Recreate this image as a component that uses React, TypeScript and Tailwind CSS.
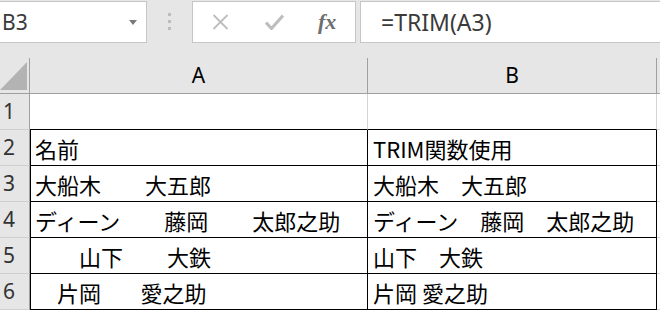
import { Fragment } from "react";

const CJK = "font-['Noto_Sans_CJK_JP',sans-serif]";
const UI = "font-['Noto_Sans','Noto_Sans_CJK_JP',sans-serif]";

type Row = { n: number; a: string; b: string };

const ROWS: Row[] = [
  { n: 1, a: "", b: "" },
  { n: 2, a: "名前", b: "TRIM関数使用" },
  { n: 3, a: "大船木　　大五郎", b: "大船木　大五郎" },
  { n: 4, a: "ディーン　　藤岡　　太郎之助", b: "ディーン　藤岡　太郎之助" },
  { n: 5, a: "　　山下　　大鉄", b: "山下　大鉄" },
  { n: 6, a: "　片岡        愛之助", b: "片岡 愛之助" },
];

function FormulaBar() {
  return (
    <div className="flex h-[58px] items-start bg-[#e6e6e6] pt-[1px]">
      {/* name box */}
      <div className="flex h-[42px] w-[147px] items-center justify-between border border-l-0 border-[#c6c6c6] bg-white pl-[2px] pr-[9px]">
        <span className={`${UI} text-[21px] leading-none text-[#3a3a3a]`}>B3</span>
        <svg width="8" height="5" viewBox="0 0 8 5">
          <path d="M0 0h8L4 5z" fill="#7a7a7a" />
        </svg>
      </div>

      {/* drag handle */}
      <div className="flex w-[45px] flex-col items-center gap-[4px] pt-[12px]">
        <span className="h-[3px] w-[3px] bg-[#bdbdbd]" />
        <span className="h-[3px] w-[3px] bg-[#bdbdbd]" />
        <span className="h-[3px] w-[3px] bg-[#bdbdbd]" />
      </div>

      {/* cancel / enter / fx */}
      <div className="flex h-[42px] w-[164px] items-center border border-[#c6c6c6] bg-white pl-[19px]">
        <svg width="17" height="16" viewBox="0 0 17 16">
          <path d="M1.5 1l14 14M15.5 1l-14 14" stroke="#bdbdbd" strokeWidth="1.8" />
        </svg>
        <svg className="ml-[36px]" width="19" height="16" viewBox="0 0 19 16">
          <path d="M1 8.5l5.5 6L18 1.5" stroke="#bdbdbd" strokeWidth="3" fill="none" />
        </svg>
        <span className="ml-[34px] font-['Liberation_Serif',serif] text-[22px] font-bold italic leading-none text-[#6e6e6e]">
          fx
        </span>
      </div>

      {/* formula */}
      <div className="ml-[4px] flex h-[42px] flex-1 items-center border border-r-0 border-[#c6c6c6] bg-white pl-[20px]">
        <span className={`${UI} text-[23px] leading-none text-[#3a3a3a]`}>=TRIM(A3)</span>
      </div>
    </div>
  );
}

function Sheet() {
  return (
    <div className="grid grid-cols-[30px_338px_289px_1fr] auto-rows-[36px]">
      {/* column headers */}
      <div className="relative border-r border-b border-[#a0a0a0] bg-[#e6e6e6]">
        <svg className="absolute left-0 top-[4px]" width="28" height="29" viewBox="0 0 28 29">
          <path d="M27 0v28H0z" fill="#b3b3b3" />
        </svg>
      </div>
      <div className={`${UI} flex items-center justify-center border-r border-b border-[#a0a0a0] bg-[#e6e6e6] text-[21px] text-black`}>
        A
      </div>
      <div className={`${UI} flex items-center justify-center border-r border-b border-[#a0a0a0] bg-[#e6e6e6] text-[21px] text-black`}>
        B
      </div>
      <div className="border-b border-[#a0a0a0] bg-[#e6e6e6]" />

      {ROWS.map((r) => {
        const table = r.n >= 2;
        return (
          <Fragment key={r.n}>
            <div
              className={`${UI} flex items-center border-r border-r-[#a0a0a0] border-b border-b-[#cfcfcf] bg-[#e6e6e6] pl-[3px] text-[21px] leading-none text-[#333]`}
            >
              {r.n}
            </div>
            <div
              className={`${CJK} flex items-center whitespace-pre border-b border-b-black pl-[4px] text-[22px] leading-none text-black ${
                table ? "border-l border-l-black border-r border-r-black" : "border-r border-r-[#d4d4d4]"
              }`}
            >
              {r.a}
            </div>
            <div
              className={`${CJK} flex items-center whitespace-pre border-b border-b-black pl-[5px] text-[22px] leading-none text-black ${
                table ? "border-r border-r-black" : "border-r border-r-[#d4d4d4]"
              }`}
            >
              {r.b}
            </div>
            <div className="border-b border-[#d4d4d4] bg-white" />
          </Fragment>
        );
      })}
    </div>
  );
}

export default function App() {
  return (
    <div className="h-[310px] w-[660px] overflow-hidden bg-white">
      <FormulaBar />
      <Sheet />
    </div>
  );
}
